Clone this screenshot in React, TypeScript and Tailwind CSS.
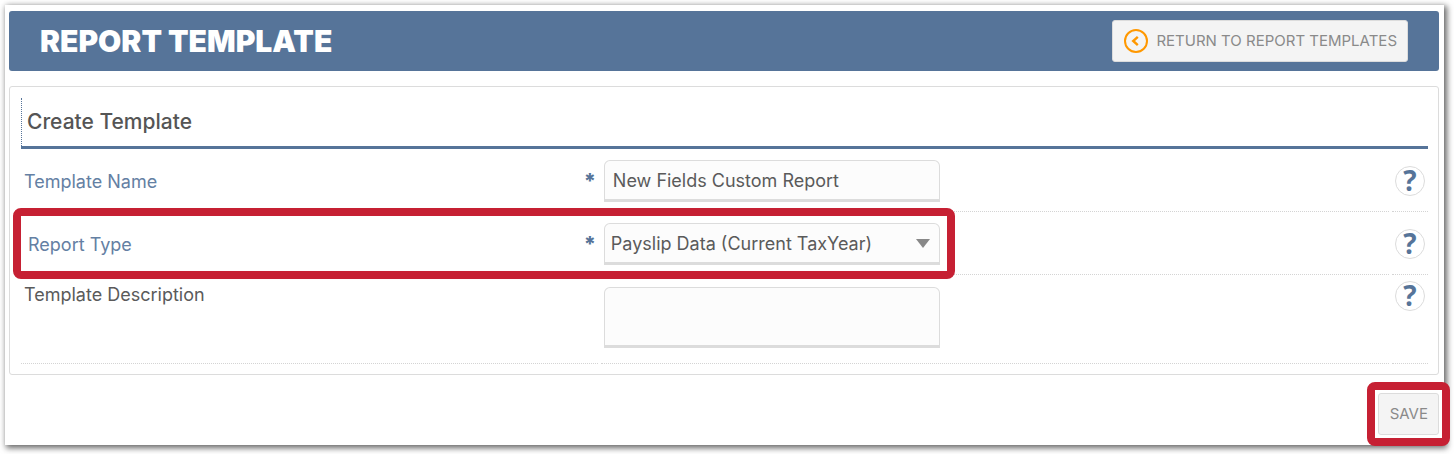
import { useState } from "react";

const FIELD =
    "block w-[336px] rounded-t-md border border-b-[3px] border-[#dcdcdc] bg-[#fcfcfc] text-[18px] font-normal text-[#5a5a5a] focus:outline-none";

const BUTTON =
    "flex h-[42px] items-center rounded-[3px] border border-[#dcdcdc] bg-[#f4f4f4] text-[15px] font-normal text-[#8a8a8a] uppercase";

const DOTTED = "border-b border-dotted border-[#d4d4d4]";

function HelpButton({ topic }: { topic: string }) {
    return (
        <button
            type="button"
            aria-label={`Help: ${topic}`}
            className="flex size-[30px] items-center justify-center rounded-full border border-[#dcdcdc] bg-white pb-[2px] font-['Open_Sans',sans-serif] text-[28px] leading-6 font-bold text-[#567499]"
        >
            ?
        </button>
    );
}

interface FormRowProps {
    id: string;
    label: string;
    required?: boolean;
    highlighted?: boolean;
    tall?: boolean;
    children: React.ReactNode;
}

function FormRow({ id, label, required, highlighted, tall, children }: FormRowProps) {
    return (
        <div className="relative grid grid-cols-[41%_1fr_36px] gap-[3px]">
            <div className={`flex items-start justify-between pr-[2px] ${DOTTED} ${highlighted ? "pl-[7px]" : "pl-[3px]"} ${tall ? "pt-2" : "pt-[21px]"}`}>
                <label htmlFor={id} className={`text-[18px] leading-6 font-normal ${tall ? "text-[#5a5a5a]" : "text-[#6480a3]"}`}>
                    {label}
                </label>
                {required && <span className="text-[21px] leading-6 font-extrabold text-[#567499]">*</span>}
            </div>
            <div className={`flex pl-[3px] ${DOTTED} ${tall ? "pt-3 pb-[15px]" : "pt-[11px] pb-[9px]"}`}>{children}</div>
            <div className={`flex items-start justify-center ${DOTTED} ${tall ? "pt-[6px]" : "pt-[17px]"}`}>
                <HelpButton topic={label} />
            </div>
            {highlighted && <div className="pointer-events-none absolute -top-1 -bottom-1 -left-2 w-[calc(41%+365px)] rounded-lg border-8 border-[#c62033]" />}
        </div>
    );
}

export default function App() {
    const [name, setName] = useState("New Fields Custom Report");
    const [reportType, setReportType] = useState("current");
    const [description, setDescription] = useState("");

    return (
        <div className="bg-white pt-[5px] pr-[10px] pb-[9px] pl-[5px] font-['Inter',sans-serif]">
            <main className="bg-white pt-[6px] pr-[5px] pb-[10px] pl-1 shadow-[2px_2px_6px_1px_rgba(0,0,0,0.6)]">
                <header className="flex h-[60px] items-center justify-between rounded-[3px] bg-[#567499] pr-[31px] pl-[31px]">
                    <h1 className="text-[30px] leading-9 font-black text-white uppercase">Report Template</h1>
                    <button type="button" className={`${BUTTON} gap-2 pr-[10px] pl-[11px]`}>
                        <svg className="size-6" viewBox="0 0 24 24" fill="none" stroke="#ff9800">
                            <circle cx="12" cy="12" r="11" strokeWidth={2} />
                            <path d="M13.8 7.8 9.2 12l4.6 4.2" strokeWidth={2.4} />
                        </svg>
                        Return to Report Templates
                    </button>
                </header>

                <form onSubmit={(event) => event.preventDefault()}>
                    <section className="mt-[15px] rounded-[3px] border border-[#dcdcdc] pt-[11px] pr-[10px] pb-[10px] pl-[11px]">
                        <div className="border-b-[3px] border-[#567499]">
                            <h2 className="flex h-12 items-center border-l border-dotted border-[#567499] pl-[5px] text-[21px] font-medium text-[#555]">Create Template</h2>
                        </div>

                        <FormRow id="template-name" label="Template Name" required>
                            <input id="template-name" type="text" value={name} onChange={(event) => setName(event.target.value)} className={`${FIELD} h-[42px] px-2`} />
                        </FormRow>

                        <FormRow id="report-type" label="Report Type" required highlighted>
                            <div className="relative">
                                <select
                                    id="report-type"
                                    value={reportType}
                                    onChange={(event) => setReportType(event.target.value)}
                                    className={`${FIELD} h-[42px] appearance-none pr-8 pl-[6px]`}
                                >
                                    <option value="current">Payslip Data (Current TaxYear)</option>
                                </select>
                                <svg className="pointer-events-none absolute top-4 right-[10px] h-[9px] w-[14px]" viewBox="0 0 14 9" fill="#888">
                                    <path d="M0 0h14L7 9z" />
                                </svg>
                            </div>
                        </FormRow>

                        <FormRow id="template-description" label="Template Description" tall>
                            <textarea
                                id="template-description"
                                value={description}
                                onChange={(event) => setDescription(event.target.value)}
                                className={`${FIELD} h-[61px] resize-none px-2 py-1`}
                            />
                        </FormRow>
                    </section>

                    <div className="mt-[18px] flex justify-end">
                        <div className="relative">
                            <button type="submit" className={`${BUTTON} pr-[10px] pl-[11px]`}>
                                Save
                            </button>
                            <div className="pointer-events-none absolute -inset-[11px] rounded-lg border-8 border-[#c62033]" />
                        </div>
                    </div>
                </form>
            </main>
        </div>
    );
}
